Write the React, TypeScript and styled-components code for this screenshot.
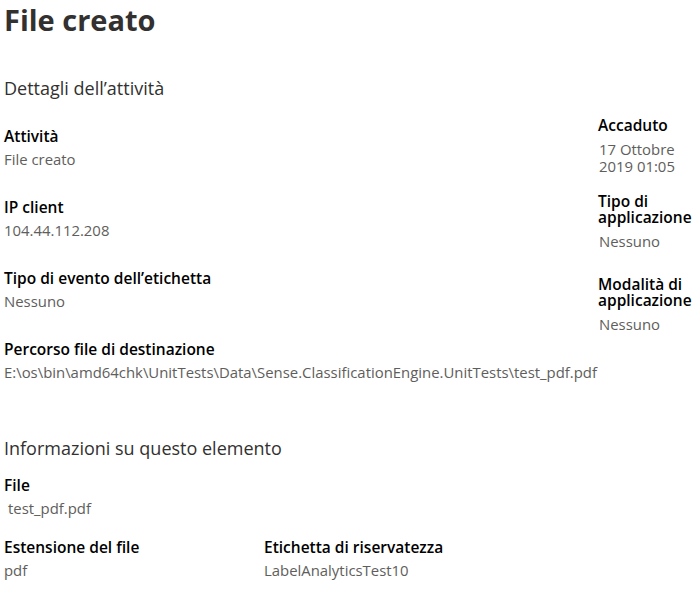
import React from 'react';
import styled, { createGlobalStyle } from 'styled-components';

const GlobalStyle = createGlobalStyle`
  body {
    margin: 0;
    background: #ffffff;
    font-family: 'Segoe UI', 'Open Sans', sans-serif;
  }
`;

const Page = styled.div`
  padding: 0 0 0 4px;
  width: 693px;
  overflow: hidden;
`;

const Title = styled.h1`
  margin: 0;
  font-size: 29px;
  line-height: 40px;
  font-weight: 700;
  color: #323130;
`;

const SectionTitle = styled.h2<{ $top: number }>`
  margin: ${p => p.$top}px 0 0 0;
  font-size: 18px;
  line-height: 25px;
  font-weight: 500;
  color: #323130;
  white-space: nowrap;
`;

const DetailsRow = styled.div`
  display: flex;
  align-items: flex-start;
`;

const LeftCol = styled.div`
  flex: 1;
  min-width: 0;
  display: flex;
  flex-direction: column;
  padding-top: 25px;
  gap: 27px;
`;

const RightCol = styled.div`
  width: 99px;
  flex-shrink: 0;
  display: flex;
  flex-direction: column;
  padding-top: 16px;
`;

const Field = styled.div`
  display: flex;
  flex-direction: column;
  gap: 2px;
`;

const SideField = styled(Field)<{ $mt?: number }>`
  gap: 8px;
  margin-top: ${p => p.$mt ?? 0}px;
`;

const Label = styled.div`
  font-size: 15.5px;
  line-height: 21px;
  font-weight: 600;
  color: #000000;
`;

const SideLabel = styled(Label)`
  line-height: 16px;
`;

const Value = styled.div<{ $indent?: boolean }>`
  font-size: 14.9px;
  line-height: 21px;
  color: #605e5c;
  white-space: nowrap;
  padding-left: ${p => (p.$indent ? 4 : 0)}px;
`;

const SideValue = styled(Value)`
  white-space: normal;
  line-height: 17px;
  padding-left: 1px;
`;

const InfoGrid = styled.div`
  display: grid;
  grid-template-columns: 260px 1fr;
  row-gap: 18px;
  padding-top: 14px;
`;

const Wide = styled.div`
  grid-column: span 2;
`;

export default function App() {
  return (
    <Page>
      <GlobalStyle />
      <Title>File creato</Title>
      <SectionTitle $top={36}>Dettagli dell’attività</SectionTitle>
      <DetailsRow>
        <LeftCol>
          <Field>
            <Label>Attività</Label>
            <Value>File creato</Value>
          </Field>
          <Field>
            <Label>IP client</Label>
            <Value>104.44.112.208</Value>
          </Field>
          <Field>
            <Label>Tipo di evento dell’etichetta</Label>
            <Value>Nessuno</Value>
          </Field>
          <Field>
            <Label>Percorso file di destinazione</Label>
            <Value>E:\os\bin\amd64chk\UnitTests\Data\Sense.ClassificationEngine.UnitTests\test_pdf.pdf</Value>
          </Field>
        </LeftCol>
        <RightCol>
          <SideField>
            <SideLabel>Accaduto</SideLabel>
            <SideValue>17 Ottobre 2019 01:05</SideValue>
          </SideField>
          <SideField $mt={18}>
            <SideLabel>Tipo di applicazione</SideLabel>
            <SideValue>Nessuno</SideValue>
          </SideField>
          <SideField $mt={26}>
            <SideLabel>Modalità di applicazione</SideLabel>
            <SideValue>Nessuno</SideValue>
          </SideField>
        </RightCol>
      </DetailsRow>
      <SectionTitle $top={53}>Informazioni su questo elemento</SectionTitle>
      <InfoGrid>
        <Wide>
          <Field>
            <Label>File</Label>
            <Value $indent>test_pdf.pdf</Value>
          </Field>
        </Wide>
        <Field>
          <Label>Estensione del file</Label>
          <Value>pdf</Value>
        </Field>
        <Field>
          <Label>Etichetta di riservatezza</Label>
          <Value>LabelAnalyticsTest10</Value>
        </Field>
      </InfoGrid>
    </Page>
  );
}
